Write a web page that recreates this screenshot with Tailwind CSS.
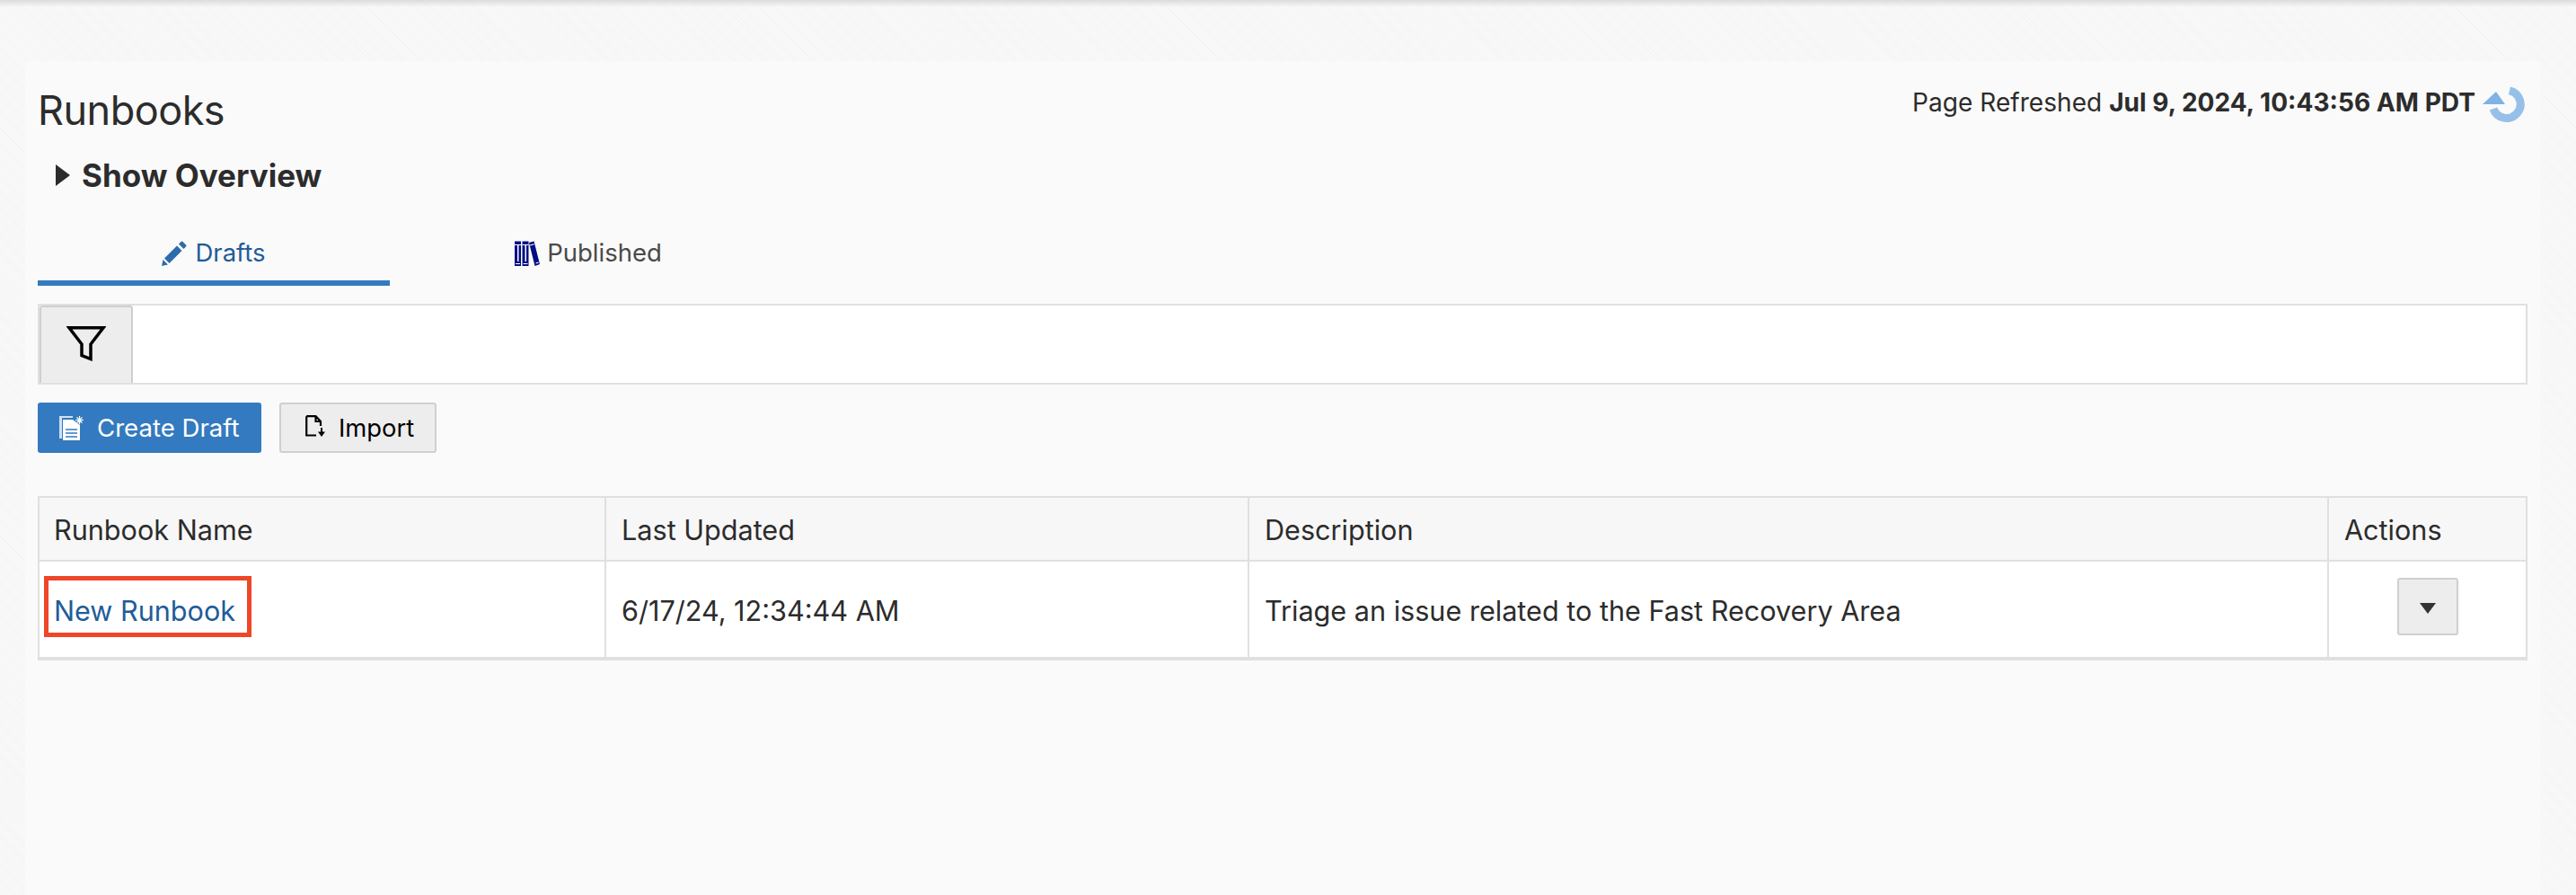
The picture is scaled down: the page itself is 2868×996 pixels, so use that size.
<!DOCTYPE html>
<html lang="en">
<head>
  <meta charset="UTF-8" />
  <title>Runbooks</title>
  <script src="https://cdn.jsdelivr.net/npm/@tailwindcss/browser@4"></script>
</head>
<body class="font-['Inter',sans-serif] text-[#2c2c2c] bg-[#f6f6f6] bg-[repeating-linear-gradient(45deg,#f4f4f4_0,#f4f4f4_1px,#f9f9f9_1px,#f9f9f9_3px)] h-[996px] overflow-hidden">
  <div class="h-[8px] bg-gradient-to-b from-[#dcdcdc] to-transparent"></div>

  <div class="mt-[60px] ml-[28px] w-[2800px] h-[928px] bg-[#fafafa] pl-[14px] pr-[14px]">
    <!-- title + refresh -->
    <div class="flex justify-between items-start">
      <h1 class="text-[45px] leading-[56px] mt-[27px] tracking-[-0.5px]">Runbooks</h1>
      <div class="flex items-start mt-[28px] mr-[2px]">
        <span class="text-[28.1px] leading-[36px]">Page Refreshed <b class="font-bold">Jul 9, 2024, 10:43:56 AM PDT</b></span>
        <svg class="w-[48px] h-[40px] ml-[8px]" viewBox="0 0 48 40"><path d="M30 4.800 A15.500 15.500 0 1 1 12 25" fill="none" stroke="#97c0e8" stroke-width="9"/><path d="M0 20 L15 6 L25 20Z" fill="#7fb2e5"/></svg>
      </div>
    </div>

    <!-- overview -->
    <div class="flex items-center mt-[29px] ml-[20px] h-[30px]">
      <span class="w-0 h-0 border-y-[12px] border-y-transparent border-l-[16px] border-l-[#2c2c2c]"></span>
      <span class="ml-[13px] text-[35px] font-bold leading-[30px]">Show Overview</span>
    </div>

    <!-- tabs -->
    <div class="flex mt-[48px]">
      <div class="w-[392px] h-[60px] pb-[6px] border-b-[6px] border-[#337ac0] flex items-center justify-center text-[#1f5c99] text-[27.5px]">
        <svg class="w-[28px] h-[28px] mr-[9px]" viewBox="0 0 28 28"><path d="M0 28 L1.500 21 L7 26.500 Z M3 19.500 L17 5.500 L22.500 11 L8.500 25 Z M19 3.500 L21.500 1 Q22.500 0 23.500 1 L27 4.500 Q28 5.500 27 6.500 L24.500 9 Z" fill="#2d6cab"/></svg>
        Drafts
      </div>
      <div class="w-[438px] h-[60px] pb-[12px] pl-[4px] flex items-center justify-center text-[#4a4a4a] text-[27.5px]">
        <svg class="w-[28px] h-[28px] mr-[8px]" viewBox="0 0 28 28"><path d="M0 0.500 H7 V28 H0 Z M8.500 0.500 H15.500 V28 H8.500 Z M16 2 L21.500 0.500 L28 26 L22.500 28 Z" fill="#000f82"/><path d="M3 5 H4.500 V23 H3 Z M11.500 5 H13 V23 H11.500 Z M0 4 H7 V5 H0 Z M8.500 4 H15.500 V5 H8.500 Z M1 25 H6 V26 H1 Z M9.500 25 H14.500 V26 H9.500 Z M23.500 24.500 L26.500 23.500 L26.800 24.500 L23.800 25.500 Z M17 4.500 L21.500 3.300 L21.800 4.300 L17.300 5.500 Z" fill="#fff"/></svg>
        Published
      </div>
    </div>

    <!-- filter bar -->
    <div class="mt-[20px] h-[90px] border-2 border-[#e0e0e0] bg-white flex">
      <button class="w-[104px] h-full pb-[4px] bg-[#ededed] border-2 border-b-0 border-[#cfcfcf] rounded-t-[3px] flex items-center justify-center">
        <svg class="w-[44px] h-[39px]" viewBox="0 0 44 39"><path d="M3 1.800 H41 L27 20 V36.500 L17 32.500 V20 Z" fill="none" stroke="#000" stroke-width="3.500"/></svg>
      </button>
    </div>

    <!-- buttons -->
    <div class="flex gap-[20px] mt-[20px]">
      <button class="w-[249px] h-[56px] rounded-[3px] bg-[#337ac0] text-white text-[27.6px] flex items-center pl-[24px]">
        <svg class="w-[27px] h-[27px] mr-[15px]" viewBox="0 0 27 27"><path d="M0 0 H15 V2 H3 V25 H0 Z" fill="#cfe0f2"/><path d="M4 4 H15 L23 10 V27 H4 Z" fill="#fff"/><path d="M7 15 H20 M7 19 H20 M7 23 H20" stroke="#337ac0" stroke-width="1.500"/><path d="M22.500 0 V9 M18 4.500 H27 M19.500 1.500 L25.500 7.500 M25.500 1.500 L19.500 7.500" stroke="#fff" stroke-width="1.200"/></svg>
        <span class="pt-[2px]">Create Draft</span>
      </button>
      <button class="w-[175px] h-[56px] rounded-[3px] bg-[#ededed] border-2 border-[#cfcfcf] text-black text-[27.4px] flex items-center pl-[27px]">
        <svg class="w-[22px] h-[24px] mr-[15px] mb-[4px]" viewBox="0 0 22 24"><path d="M1.200 1.200 H11.500 L17 7 V12 M11.500 1.200 V7 H17 M1.200 1.200 V22.500 H12" fill="none" stroke="#000" stroke-width="2.200"/><path d="M18 14 V19" stroke="#000" stroke-width="2"/><path d="M14 18.500 H22 L18 24 Z" fill="#000"/></svg>
        <span class="pt-[2px]">Import</span>
      </button>
    </div>

    <!-- table -->
    <div class="mt-[48px] border-x-2 border-t-2 border-b-4 border-[#e0e0e0] bg-white grid grid-cols-[631px_716px_1202px_1fr] text-[30.6px]">
      <div class="h-[71px] pt-[2px] bg-[#f7f7f7] border-b-2 border-r-2 border-[#e0e0e0] pl-[16px] flex items-center">Runbook Name</div>
      <div class="h-[71px] pt-[2px] bg-[#f7f7f7] border-b-2 border-r-2 border-[#e0e0e0] pl-[17px] flex items-center">Last Updated</div>
      <div class="h-[71px] pt-[2px] bg-[#f7f7f7] border-b-2 border-r-2 border-[#e0e0e0] pl-[17px] flex items-center">Description</div>
      <div class="h-[71px] pt-[2px] bg-[#f7f7f7] border-b-2 border-[#e0e0e0] pl-[17px] flex items-center">Actions</div>

      <div class="h-[106px] pb-[6px] border-r-2 border-[#e0e0e0] pl-[5px] flex items-center">
        <a class="w-[231px] h-[68px] border-[5px] border-[#ee4628] pl-[6px] pt-[10px] flex items-center text-[#1f5c99]">New Runbook</a>
      </div>
      <div class="h-[106px] pt-[4px] border-r-2 border-[#e0e0e0] pl-[17px] flex items-center">6/17/24, 12:34:44 AM</div>
      <div class="h-[106px] pt-[4px] border-r-2 border-[#e0e0e0] pl-[17px] flex items-center">Triage an issue related to the Fast Recovery Area</div>
      <div class="h-[106px] pb-[6px] flex items-center justify-center">
        <button class="w-[68px] h-[64px] pt-[4px] rounded-[3px] bg-[#ededed] border-2 border-[#cfcfcf] flex items-center justify-center">
          <span class="w-0 h-0 border-x-[9px] border-x-transparent border-t-[12px] border-t-[#333]"></span>
        </button>
      </div>
    </div>
  </div>
</body>
</html>
